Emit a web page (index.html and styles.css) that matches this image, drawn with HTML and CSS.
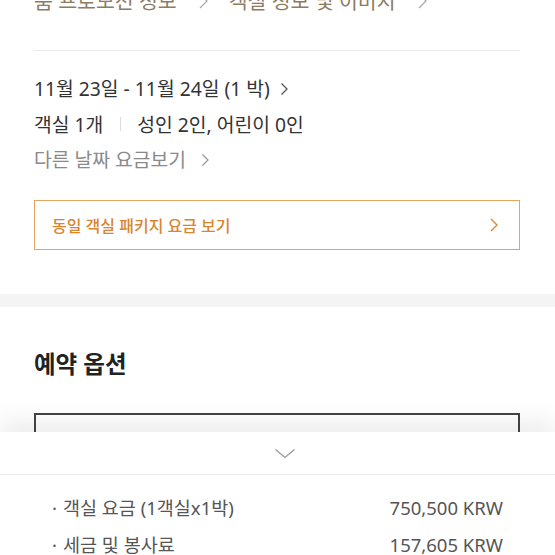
FILE: index.html
```html
<!DOCTYPE html>
<html lang="ko">
<head>
<meta charset="utf-8">
<link rel="stylesheet" href="styles.css">
</head>
<body>
<div class="page">
  <div class="section">
    <div class="top-links">
      <span class="link">룸 프로모션 정보<svg class="chev-icon" width="12" height="18" viewBox="0 0 12 18"><path d="M3 2 L10 9 L3 16" fill="none" stroke="#aaa" stroke-width="1.3"/></svg></span>
      <span class="link">객실 정보 및 이미지<svg class="chev-icon" width="12" height="18" viewBox="0 0 12 18"><path d="M3 2 L10 9 L3 16" fill="none" stroke="#aaa" stroke-width="1.3"/></svg></span>
    </div>
    <div class="divider"></div>
    <div class="info">
      <div class="line dark"><span>11월 23일 - 11월 24일 (1 박)</span><svg class="chev-icon" width="9" height="14" viewBox="0 0 9 14"><path d="M1.5 1.5 L7 7 L1.5 12.5" fill="none" stroke="#555" stroke-width="1.3"/></svg></div>
      <div class="line dark"><span>객실 1개</span><span class="sep"></span><span>성인 2인, 어린이 0인</span></div>
      <div class="line gray"><span>다른 날짜 요금보기</span><svg class="chev-icon" width="9" height="14" viewBox="0 0 9 14"><path d="M1.5 1.5 L7 7 L1.5 12.5" fill="none" stroke="#999" stroke-width="1.3"/></svg></div>
    </div>
    <div class="pkg-btn">
      <span>동일 객실 패키지 요금 보기</span>
      <svg width="10" height="16" viewBox="0 0 10 16"><path d="M2 2 L8 8 L2 14" fill="none" stroke="#d9893a" stroke-width="1.4"/></svg>
    </div>
  </div>
  <div class="band"></div>
  <div class="section">
    <h2 class="title">예약 옵션</h2>
    <div class="option-box"></div>
  </div>
</div>
<div class="panel">
  <div class="panel-toggle">
    <svg width="22" height="11" viewBox="0 0 22 11"><path d="M1.5 1.5 L11 9.5 L20.5 1.5" fill="none" stroke="#999" stroke-width="1.3"/></svg>
  </div>
  <div class="panel-rows">
    <div class="row"><span class="label"><span class="dot">·</span>객실 요금 (1객실x1박)</span><span class="price">750,500 KRW</span></div>
    <div class="row"><span class="label"><span class="dot">·</span>세금 및 봉사료</span><span class="price">157,605 KRW</span></div>
  </div>
</div>
</body>
</html>
```
FILE: styles.css
```css
html, body {
  margin: 0;
  padding: 0;
  background: #fff;
  overflow: hidden;
}
body {
  font-family: "Noto Sans", "Noto Sans CJK KR", sans-serif;
  width: 555px;
  height: 555px;
  position: relative;
}
.page {
  width: 555px;
}
.section {
  padding: 0 35px 0 34px;
}
.top-links {
  margin-top: -13px;
  height: 28px;
  line-height: 28px;
  font-size: 20.5px;
  color: #8c7c63;
  display: flex;
  gap: 20px;
  white-space: nowrap;
}
.link {
  display: flex;
  align-items: center;
}
.top-links .chev-icon {
  margin-left: 20px;
}
.divider {
  margin-top: 35px;
  border-top: 1px solid #ececec;
}
.info {
  padding-top: 20px;
}
.line {
  height: 35.5px;
  line-height: 35.5px;
  font-size: 19.3px;
  display: flex;
  align-items: center;
  white-space: nowrap;
}
.line.dark { color: #333; }
.line.gray { color: #8a8a8a; }
.chev-icon {
  margin-left: 10px;
}
.line.gray .chev-icon { margin-left: 15px; }
.sep {
  display: inline-block;
  width: 1px;
  height: 14px;
  background: #ddd;
  margin: 0 16px 0 17px;
}
.pkg-btn {
  margin-top: 22px;
  height: 48px;
  border: 1px solid #e3a560;
  display: flex;
  align-items: center;
  justify-content: space-between;
  padding: 0 20px 0 17px;
  color: #d9852f;
  font-size: 16px;
  font-weight: 500;
}
.band {
  margin-top: 44px;
  height: 13px;
  background: #f4f4f4;
}
.title {
  margin: 42px 0 0;
  font-size: 23.5px;
  font-weight: 700;
  color: #222;
  line-height: 30px;
}
.option-box {
  margin-top: 34px;
  height: 80px;
  border: 2px solid #444;
  border-bottom: none;
}
.panel {
  position: absolute;
  left: 0;
  right: 0;
  top: 432px;
  bottom: 0;
  background: #fff;
  box-shadow: 0 -12px 22px rgba(0,0,0,0.07);
}
.panel-toggle {
  height: 42px;
  border-bottom: 1px solid #ececec;
  display: flex;
  justify-content: center;
  align-items: center;
  padding-left: 14px;
}
.panel-rows {
  padding: 14px 52px 0 52px;
}
.row {
  display: flex;
  justify-content: space-between;
  height: 37px;
  line-height: 37px;
  font-size: 18.5px;
  color: #555;
}
.dot {
  display: inline-block;
  width: 11px;
}
```
